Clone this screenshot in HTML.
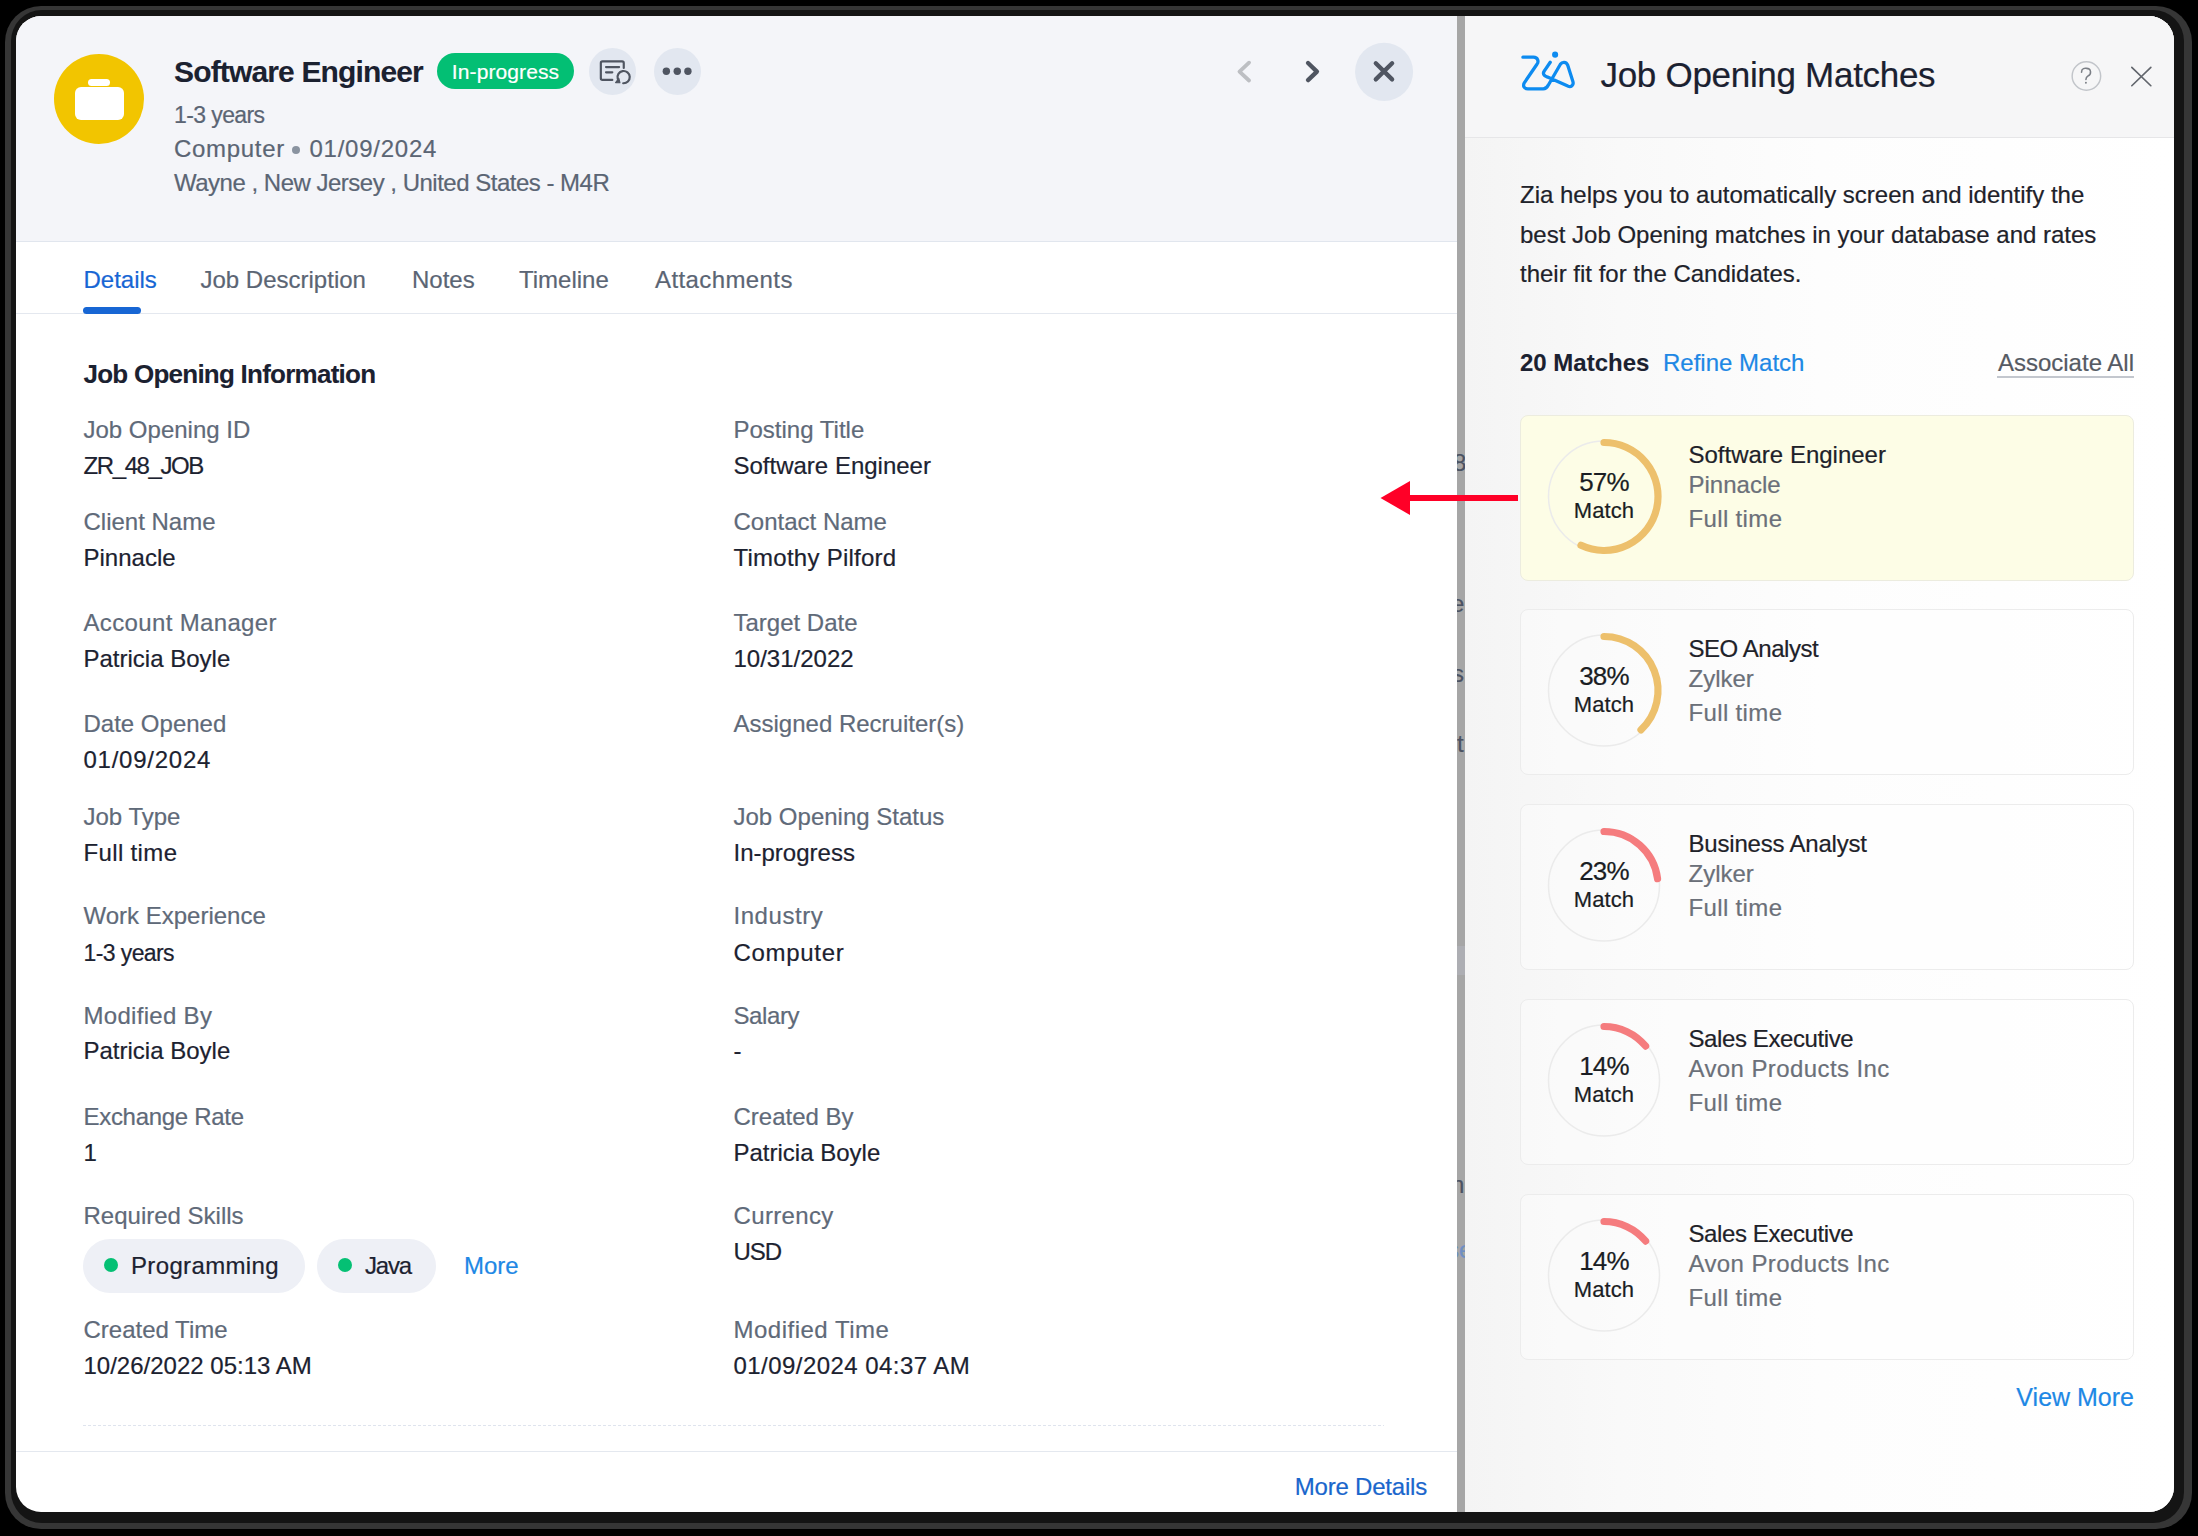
<!DOCTYPE html>
<html><head><meta charset="utf-8"><style>
html,body{margin:0;padding:0;width:2198px;height:1536px;overflow:hidden;background:#000;}
.t{position:absolute;white-space:nowrap;font-family:"Liberation Sans", sans-serif;-webkit-text-stroke:0.2px currentColor;}
svg{overflow:visible}
</style></head><body>
<div style="position:absolute;left:5px;top:6px;width:2186.5px;height:1522.5px;border-radius:36px;background:#363636;"></div><div style="position:absolute;left:10.5px;top:10px;width:2173px;height:1513px;border-radius:31px;background:#141414;"></div><div id="win" style="position:absolute;left:16px;top:16px;width:2158px;height:1496px;border-radius:25px;overflow:hidden;background:#fff;"><div style="position:absolute;left:-16px;top:-16px;width:2198px;height:1536px;"><div style="position:absolute;left:16px;top:16px;width:1441px;height:225px;background:#f4f5f9;border-bottom:1.5px solid #e1e6ee;"></div><div style="position:absolute;left:16px;top:313px;width:1441px;height:0;border-top:1.5px solid #e4e8ef;"></div><div style="position:absolute;left:54px;top:54px;width:90px;height:90px;border-radius:50%;background:#f2c500;"></div><div style="position:absolute;left:88px;top:79px;width:22px;height:7px;border-radius:3.5px;background:#fff;"></div><div style="position:absolute;left:75px;top:87px;width:49px;height:33px;border-radius:6px;background:#fff;"></div><div class="t" style="left:174px;top:57.41px;font-size:30px;line-height:30px;color:#1b2130;font-weight:700;-webkit-text-stroke:0.1px currentColor;letter-spacing:-0.85px;">Software Engineer</div><div style="position:absolute;left:437px;top:53px;width:137px;height:36px;border-radius:18px;background:#03bf74;"></div><div class="t" style="left:205.5px;width:600px;text-align:center;top:60.62px;font-size:21px;line-height:21px;color:#fff;letter-spacing:0.1px;">In-progress</div><div style="position:absolute;left:589px;top:48px;width:47px;height:47px;border-radius:50%;background:#e2e7f0;"></div><div style="position:absolute;left:654px;top:48px;width:47px;height:47px;border-radius:50%;background:#e2e7f0;"></div><svg style="position:absolute;left:585px;top:45px" width="120" height="55" viewBox="0 0 2198 1007">
<g fill="none" stroke="#4f5561" stroke-width="40" stroke-linecap="round" stroke-linejoin="round">
<path d="M710,420 L710,330 Q710,300 680,300 L320,300 Q290,300 290,330 L290,610 Q290,640 320,640 L500,640"/>
<path d="M385,405 L625,405"/><path d="M385,500 L500,500"/>
<path d="M700,700 A112,112 0 1 0 600,620"/>
</g>
<path d="M560,690 L640,690 L620,610 Z" fill="#4f5561" stroke="#4f5561" stroke-width="20" stroke-linejoin="round"/>
<circle cx="1490" cy="480" r="68" fill="#4f5561"/><circle cx="1690" cy="480" r="68" fill="#4f5561"/><circle cx="1885" cy="480" r="68" fill="#4f5561"/>
</svg><div class="t" style="left:174px;top:104.33px;font-size:23px;line-height:23px;color:#5b6574;letter-spacing:-0.6px;">1-3 years</div><div class="t" style="left:174px;top:137.48px;font-size:24px;line-height:24px;color:#5b6574;letter-spacing:0.7px;">Computer</div><div style="position:absolute;left:292px;top:146px;width:8px;height:8px;border-radius:50%;background:#8a93a0;"></div><div class="t" style="left:309.5px;top:137.48px;font-size:24px;line-height:24px;color:#5b6574;letter-spacing:0.75px;">01/09/2024</div><div class="t" style="left:174px;top:171.48px;font-size:24px;line-height:24px;color:#5b6574;letter-spacing:-0.5px;">Wayne , New Jersey , United States - M4R</div><svg style="position:absolute;left:1200px;top:20px" width="280" height="120" viewBox="0 0 2198 942">
<path d="M385,335 L310,405 L385,475" fill="none" stroke="#bdbfc3" stroke-width="30" stroke-linecap="round" stroke-linejoin="round"/>
<path d="M848,338 L918,405 L848,472" fill="none" stroke="#4f5561" stroke-width="34" stroke-linecap="round" stroke-linejoin="round"/>
<circle cx="1445" cy="407" r="228" fill="#e2e7f0"/>
<path d="M1380,340 L1508,466 M1508,340 L1380,466" fill="none" stroke="#4f5561" stroke-width="34" stroke-linecap="round"/>
</svg><div class="t" style="left:83.5px;top:268.18px;font-size:24px;line-height:24px;color:#1766d4;">Details</div><div style="position:absolute;left:83px;top:307px;width:58px;height:7px;border-radius:4px;background:#1766d4;"></div><div class="t" style="left:200.5px;top:268.18px;font-size:24px;line-height:24px;color:#5b6574;">Job Description</div><div class="t" style="left:412px;top:268.18px;font-size:24px;line-height:24px;color:#5b6574;">Notes</div><div class="t" style="left:519px;top:268.18px;font-size:24px;line-height:24px;color:#5b6574;">Timeline</div><div class="t" style="left:655px;top:268.18px;font-size:24px;line-height:24px;color:#5b6574;letter-spacing:0.4px;">Attachments</div><div class="t" style="left:83.5px;top:360.59px;font-size:26px;line-height:26px;color:#1b2130;font-weight:700;-webkit-text-stroke:0.1px currentColor;letter-spacing:-0.75px;">Job Opening Information</div><div class="t" style="left:83.5px;top:417.98px;font-size:24px;line-height:24px;color:#5f6a79;">Job Opening ID</div><div class="t" style="left:83.5px;top:454.48px;font-size:24px;line-height:24px;color:#1c2230;letter-spacing:-1.4px;">ZR_48_JOB</div><div class="t" style="left:733.5px;top:417.98px;font-size:24px;line-height:24px;color:#5f6a79;">Posting Title</div><div class="t" style="left:733.5px;top:454.48px;font-size:24px;line-height:24px;color:#1c2230;">Software Engineer</div><div class="t" style="left:83.5px;top:510.48px;font-size:24px;line-height:24px;color:#5f6a79;">Client Name</div><div class="t" style="left:83.5px;top:546.48px;font-size:24px;line-height:24px;color:#1c2230;">Pinnacle</div><div class="t" style="left:733.5px;top:510.48px;font-size:24px;line-height:24px;color:#5f6a79;">Contact Name</div><div class="t" style="left:733.5px;top:546.48px;font-size:24px;line-height:24px;color:#1c2230;letter-spacing:0.25px;">Timothy Pilford</div><div class="t" style="left:83.5px;top:611.48px;font-size:24px;line-height:24px;color:#5f6a79;letter-spacing:0.35px;">Account Manager</div><div class="t" style="left:83.5px;top:646.98px;font-size:24px;line-height:24px;color:#1c2230;">Patricia Boyle</div><div class="t" style="left:733.5px;top:611.48px;font-size:24px;line-height:24px;color:#5f6a79;">Target Date</div><div class="t" style="left:733.5px;top:646.98px;font-size:24px;line-height:24px;color:#1c2230;">10/31/2022</div><div class="t" style="left:83.5px;top:712.08px;font-size:24px;line-height:24px;color:#5f6a79;">Date Opened</div><div class="t" style="left:83.5px;top:747.88px;font-size:24px;line-height:24px;color:#1c2230;letter-spacing:0.75px;">01/09/2024</div><div class="t" style="left:733.5px;top:712.08px;font-size:24px;line-height:24px;color:#5f6a79;">Assigned Recruiter(s)</div><div class="t" style="left:83.5px;top:804.88px;font-size:24px;line-height:24px;color:#5f6a79;">Job Type</div><div class="t" style="left:83.5px;top:841.48px;font-size:24px;line-height:24px;color:#1c2230;letter-spacing:0.35px;">Full time</div><div class="t" style="left:733.5px;top:804.88px;font-size:24px;line-height:24px;color:#5f6a79;">Job Opening Status</div><div class="t" style="left:733.5px;top:841.48px;font-size:24px;line-height:24px;color:#1c2230;">In-progress</div><div class="t" style="left:83.5px;top:904.48px;font-size:24px;line-height:24px;color:#5f6a79;">Work Experience</div><div class="t" style="left:83.5px;top:942.03px;font-size:23px;line-height:23px;color:#1c2230;letter-spacing:-0.6px;">1-3 years</div><div class="t" style="left:733.5px;top:904.48px;font-size:24px;line-height:24px;color:#5f6a79;letter-spacing:0.55px;">Industry</div><div class="t" style="left:733.5px;top:941.18px;font-size:24px;line-height:24px;color:#1c2230;letter-spacing:0.7px;">Computer</div><div class="t" style="left:83.5px;top:1003.68px;font-size:24px;line-height:24px;color:#5f6a79;letter-spacing:0.3px;">Modified By</div><div class="t" style="left:83.5px;top:1039.28px;font-size:24px;line-height:24px;color:#1c2230;">Patricia Boyle</div><div class="t" style="left:733.5px;top:1003.68px;font-size:24px;line-height:24px;color:#5f6a79;letter-spacing:-0.4px;">Salary</div><div class="t" style="left:733.5px;top:1039.28px;font-size:24px;line-height:24px;color:#1c2230;">-</div><div class="t" style="left:83.5px;top:1104.68px;font-size:24px;line-height:24px;color:#5f6a79;letter-spacing:-0.3px;">Exchange Rate</div><div class="t" style="left:83.5px;top:1140.78px;font-size:24px;line-height:24px;color:#1c2230;">1</div><div class="t" style="left:733.5px;top:1104.68px;font-size:24px;line-height:24px;color:#5f6a79;">Created By</div><div class="t" style="left:733.5px;top:1140.78px;font-size:24px;line-height:24px;color:#1c2230;">Patricia Boyle</div><div class="t" style="left:83.5px;top:1204.48px;font-size:24px;line-height:24px;color:#5f6a79;">Required Skills</div><div class="t" style="left:733.5px;top:1204.48px;font-size:24px;line-height:24px;color:#5f6a79;letter-spacing:0.35px;">Currency</div><div class="t" style="left:733.5px;top:1240.48px;font-size:24px;line-height:24px;color:#1c2230;letter-spacing:-1.0px;">USD</div><div class="t" style="left:83.5px;top:1317.98px;font-size:24px;line-height:24px;color:#5f6a79;">Created Time</div><div class="t" style="left:83.5px;top:1354.48px;font-size:24px;line-height:24px;color:#1c2230;">10/26/2022 05:13 AM</div><div class="t" style="left:733.5px;top:1317.98px;font-size:24px;line-height:24px;color:#5f6a79;letter-spacing:0.5px;">Modified Time</div><div class="t" style="left:733.5px;top:1354.48px;font-size:24px;line-height:24px;color:#1c2230;letter-spacing:0.45px;">01/09/2024 04:37 AM</div><div style="position:absolute;left:83px;top:1239px;width:222px;height:54px;border-radius:27px;background:#eef0f6;"></div><div style="position:absolute;left:317px;top:1239px;width:119px;height:54px;border-radius:27px;background:#eef0f6;"></div><div style="position:absolute;left:104px;top:1258px;width:14px;height:14px;border-radius:50%;background:#05c074;"></div><div style="position:absolute;left:338px;top:1258px;width:14px;height:14px;border-radius:50%;background:#05c074;"></div><div class="t" style="left:131px;top:1253.98px;font-size:24px;line-height:24px;color:#1c2230;letter-spacing:0.35px;">Programming</div><div class="t" style="left:365px;top:1253.98px;font-size:24px;line-height:24px;color:#1c2230;letter-spacing:-1.2px;">Java</div><div class="t" style="left:464px;top:1253.98px;font-size:24px;line-height:24px;color:#1e88e5;">More</div><div style="position:absolute;left:83px;top:1424.5px;width:1301px;height:1.5px;background:repeating-linear-gradient(90deg,#dfe4ee 0 3px,transparent 3px 5px);"></div><div style="position:absolute;left:16px;top:1451px;width:1441px;height:0;border-top:1.5px solid #e4e8ef;"></div><div class="t" style="right:771px;text-align:right;top:1475.48px;font-size:24px;line-height:24px;color:#1a66cc;letter-spacing:-0.2px;">More Details</div><div style="position:absolute;left:1457px;top:16px;width:8px;height:1496px;background:#a6a6a6;"></div><div style="position:absolute;left:1457px;top:16px;width:8px;height:1496px;overflow:hidden;"><div class="t" style="left:-4px;top:434.98px;font-size:24px;line-height:24px;color:#4b5262;">8</div><div class="t" style="left:-6px;top:576.48px;font-size:24px;line-height:24px;color:#4b5262;">e</div><div class="t" style="left:-5px;top:645.98px;font-size:24px;line-height:24px;color:#4b5262;">s</div><div class="t" style="left:0px;top:716.48px;font-size:24px;line-height:24px;color:#4b5262;">t</div><div class="t" style="left:-6px;top:1157.48px;font-size:24px;line-height:24px;color:#4b5262;">n</div><div class="t" style="left:-10px;top:1222.48px;font-size:24px;line-height:24px;color:#6f8fc4;">se</div><div style="position:absolute;left:0;top:930px;width:8px;height:29px;background:#adaeb3;"></div></div><div style="position:absolute;left:1465px;top:16px;width:709px;height:1496px;background:linear-gradient(90deg,#f4f4f4 0%,#f9f9f9 22%,#fdfdfd 50%,#ffffff 100%);"></div><div style="position:absolute;left:1465px;top:16px;width:709px;height:121px;background:#f6f6f7;border-bottom:1.5px solid #e6e6e8;"></div><svg style="position:absolute;left:1510px;top:40px" width="80" height="60" viewBox="0 0 2048 1536">
<path d="M330,440 L600,440 C720,440 740,560 690,620 L370,1090 C320,1180 360,1250 460,1250 L850,1250 C920,1250 960,1200 990,1140 L1290,620 C1330,560 1440,540 1480,650 L1610,1060 C1640,1160 1560,1220 1480,1180 L960,950 C860,920 830,850 880,790 L1030,570" fill="none" stroke="#0d8bf0" stroke-width="84" stroke-linecap="round" stroke-linejoin="round"/>
<circle cx="1155" cy="375" r="78" fill="#0d8bf0"/>
</svg><div class="t" style="left:1600.5px;top:57.37px;font-size:35px;line-height:35px;color:#1b2130;letter-spacing:-0.3px;">Job Opening Matches</div><svg style="position:absolute;left:2000px;top:0px" width="198" height="150" viewBox="0 0 2028 1536">
<circle cx="885" cy="778" r="146" fill="none" stroke="#c2c5ca" stroke-width="15"/>
<path d="M835,740 C835,690 880,700 885,700 C940,700 935,760 905,775 C880,790 880,800 880,815" fill="none" stroke="#7b7f86" stroke-width="16" stroke-linecap="round"/>
<circle cx="880" cy="848" r="10" fill="#7b7f86"/>
<path d="M1350,690 L1545,878 M1545,690 L1350,878" fill="none" stroke="#62666d" stroke-width="17" stroke-linecap="round"/>
</svg><div class="t" style="left:1520px;top:183.48px;font-size:24px;line-height:24px;color:#1e222a;">Zia helps you to automatically screen and identify the</div><div class="t" style="left:1520px;top:223.48px;font-size:24px;line-height:24px;color:#1e222a;">best Job Opening matches in your database and rates</div><div class="t" style="left:1520px;top:262.48px;font-size:24px;line-height:24px;color:#1e222a;">their fit for the Candidates.</div><div class="t" style="left:1520px;top:350.98px;font-size:24px;line-height:24px;color:#1b2130;font-weight:700;-webkit-text-stroke:0.1px currentColor;">20 Matches</div><div class="t" style="left:1663px;top:350.98px;font-size:24px;line-height:24px;color:#1e88e5;">Refine Match</div><div class="t" style="right:64px;text-align:right;top:350.98px;font-size:24px;line-height:24px;color:#555a63;">Associate All</div><div style="position:absolute;left:1997px;top:376px;width:137px;height:2px;background:#c3c7ce;"></div><div style="position:absolute;left:1520px;top:415px;width:612px;height:164px;border-radius:8px;background:#fdfde6;border:1.5px solid #ececdf;"></div><svg style="position:absolute;left:0;top:0" width="2198" height="1536"><circle cx="1604" cy="496.5" r="55.5" fill="none" stroke="#ebebeb" stroke-width="1.5"/><path d="M1604,442.5 A54,54 0 1 1 1581.01,545.36" fill="none" stroke="#edc06c" stroke-width="7.2" stroke-linecap="round"/></svg><div class="t" style="left:1304px;width:600px;text-align:center;top:468.99px;font-size:26px;line-height:26px;color:#1a1d23;letter-spacing:-0.8px;">57%</div><div class="t" style="left:1304px;width:600px;text-align:center;top:499.98px;font-size:22px;line-height:22px;color:#1a1d23;letter-spacing:0.1px;">Match</div><div class="t" style="left:1688.5px;top:443.48px;font-size:24px;line-height:24px;color:#1e2229;">Software Engineer</div><div class="t" style="left:1688.5px;top:473.48px;font-size:24px;line-height:24px;color:#6b7079;">Pinnacle</div><div class="t" style="left:1688.5px;top:507.48px;font-size:24px;line-height:24px;color:#6b7079;letter-spacing:0.35px;">Full time</div><div style="position:absolute;left:1520px;top:609px;width:612px;height:164px;border-radius:8px;background:rgba(255,255,255,0.35);border:1.5px solid #ececec;"></div><svg style="position:absolute;left:0;top:0" width="2198" height="1536"><circle cx="1604" cy="690.5" r="55.5" fill="none" stroke="#ebebeb" stroke-width="1.5"/><path d="M1604,636.5 A54,54 0 0 1 1640.97,729.86" fill="none" stroke="#edc06c" stroke-width="7.2" stroke-linecap="round"/></svg><div class="t" style="left:1304px;width:600px;text-align:center;top:662.99px;font-size:26px;line-height:26px;color:#1a1d23;letter-spacing:-0.8px;">38%</div><div class="t" style="left:1304px;width:600px;text-align:center;top:693.98px;font-size:22px;line-height:22px;color:#1a1d23;letter-spacing:0.1px;">Match</div><div class="t" style="left:1688.5px;top:637.48px;font-size:24px;line-height:24px;color:#1e2229;letter-spacing:-0.45px;">SEO Analyst</div><div class="t" style="left:1688.5px;top:667.48px;font-size:24px;line-height:24px;color:#6b7079;">Zylker</div><div class="t" style="left:1688.5px;top:701.48px;font-size:24px;line-height:24px;color:#6b7079;letter-spacing:0.35px;">Full time</div><div style="position:absolute;left:1520px;top:804px;width:612px;height:164px;border-radius:8px;background:rgba(255,255,255,0.35);border:1.5px solid #ececec;"></div><svg style="position:absolute;left:0;top:0" width="2198" height="1536"><circle cx="1604" cy="885.5" r="55.5" fill="none" stroke="#ebebeb" stroke-width="1.5"/><path d="M1604,831.5 A54,54 0 0 1 1657.57,878.73" fill="none" stroke="#f57c7e" stroke-width="7.2" stroke-linecap="round"/></svg><div class="t" style="left:1304px;width:600px;text-align:center;top:857.99px;font-size:26px;line-height:26px;color:#1a1d23;letter-spacing:-0.8px;">23%</div><div class="t" style="left:1304px;width:600px;text-align:center;top:888.98px;font-size:22px;line-height:22px;color:#1a1d23;letter-spacing:0.1px;">Match</div><div class="t" style="left:1688.5px;top:832.48px;font-size:24px;line-height:24px;color:#1e2229;letter-spacing:-0.2px;">Business Analyst</div><div class="t" style="left:1688.5px;top:862.48px;font-size:24px;line-height:24px;color:#6b7079;">Zylker</div><div class="t" style="left:1688.5px;top:896.48px;font-size:24px;line-height:24px;color:#6b7079;letter-spacing:0.35px;">Full time</div><div style="position:absolute;left:1520px;top:999px;width:612px;height:164px;border-radius:8px;background:rgba(255,255,255,0.35);border:1.5px solid #ececec;"></div><svg style="position:absolute;left:0;top:0" width="2198" height="1536"><circle cx="1604" cy="1080.5" r="55.5" fill="none" stroke="#ebebeb" stroke-width="1.5"/><path d="M1604,1026.5 A54,54 0 0 1 1645.61,1046.08" fill="none" stroke="#f57c7e" stroke-width="7.2" stroke-linecap="round"/></svg><div class="t" style="left:1304px;width:600px;text-align:center;top:1052.99px;font-size:26px;line-height:26px;color:#1a1d23;letter-spacing:-0.8px;">14%</div><div class="t" style="left:1304px;width:600px;text-align:center;top:1083.98px;font-size:22px;line-height:22px;color:#1a1d23;letter-spacing:0.1px;">Match</div><div class="t" style="left:1688.5px;top:1027.48px;font-size:24px;line-height:24px;color:#1e2229;letter-spacing:-0.4px;">Sales Executive</div><div class="t" style="left:1688.5px;top:1057.48px;font-size:24px;line-height:24px;color:#6b7079;letter-spacing:0.4px;">Avon Products Inc</div><div class="t" style="left:1688.5px;top:1091.48px;font-size:24px;line-height:24px;color:#6b7079;letter-spacing:0.35px;">Full time</div><div style="position:absolute;left:1520px;top:1194px;width:612px;height:164px;border-radius:8px;background:rgba(255,255,255,0.35);border:1.5px solid #ececec;"></div><svg style="position:absolute;left:0;top:0" width="2198" height="1536"><circle cx="1604" cy="1275.5" r="55.5" fill="none" stroke="#ebebeb" stroke-width="1.5"/><path d="M1604,1221.5 A54,54 0 0 1 1645.61,1241.08" fill="none" stroke="#f57c7e" stroke-width="7.2" stroke-linecap="round"/></svg><div class="t" style="left:1304px;width:600px;text-align:center;top:1247.99px;font-size:26px;line-height:26px;color:#1a1d23;letter-spacing:-0.8px;">14%</div><div class="t" style="left:1304px;width:600px;text-align:center;top:1278.98px;font-size:22px;line-height:22px;color:#1a1d23;letter-spacing:0.1px;">Match</div><div class="t" style="left:1688.5px;top:1222.48px;font-size:24px;line-height:24px;color:#1e2229;letter-spacing:-0.4px;">Sales Executive</div><div class="t" style="left:1688.5px;top:1252.48px;font-size:24px;line-height:24px;color:#6b7079;letter-spacing:0.4px;">Avon Products Inc</div><div class="t" style="left:1688.5px;top:1286.48px;font-size:24px;line-height:24px;color:#6b7079;letter-spacing:0.35px;">Full time</div><div class="t" style="right:64px;text-align:right;top:1385.14px;font-size:25px;line-height:25px;color:#1e88e5;">View More</div><svg style="position:absolute;left:0;top:0" width="2198" height="1536"><rect x="1408" y="495" width="110" height="6" fill="#ff0027"/><path d="M1380.5,498 L1410,481 L1410,515 Z" fill="#ff0027"/></svg></div></div>
</body></html>
